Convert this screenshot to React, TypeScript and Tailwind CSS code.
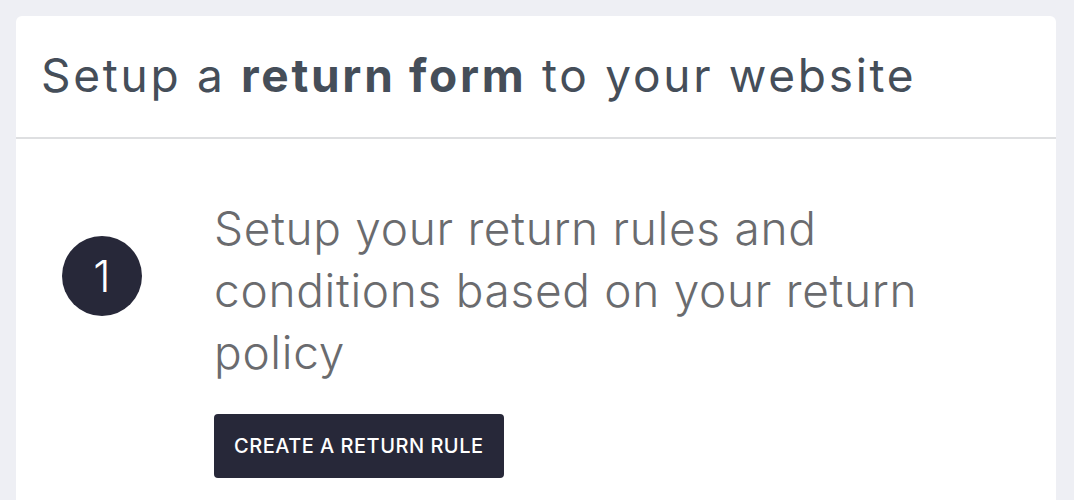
import React from 'react';

export default function App() {
  return (
    <div className="min-h-screen bg-[#eeeff4] pt-4 pl-4 pr-[18px]" style={{ fontFamily: 'Inter, "Open Sans", sans-serif' }}>
      <div className="bg-white rounded-md overflow-hidden">
        <div className="h-[123px] flex items-center px-[25px] pb-[3px] border-b-2 border-[#dedfe1]">
          <h1 className="text-[46px] leading-none text-[#454e59] tracking-[2.7px]">
            Setup a <span className="font-bold">return form</span> to your website
          </h1>
        </div>
        <div className="flex pl-[46px] pt-[58px] pb-10">
          <div className="w-20 h-20 mt-[39px] rounded-full bg-[#272839] text-white flex items-center justify-center text-[44px] font-light shrink-0">
            1
          </div>
          <div className="ml-[72px]">
            <p className="text-[46px] leading-[62px] font-light text-[#6a6b6e] tracking-[0.7px] max-w-[760px]">
              Setup your return rules and conditions based on your return policy
            </p>
            <button className="mt-[31px] h-16 px-5 rounded bg-[#272839] text-white text-[20px] font-medium tracking-[0.5px]">
              CREATE A RETURN RULE
            </button>
          </div>
        </div>
      </div>
    </div>
  );
}
